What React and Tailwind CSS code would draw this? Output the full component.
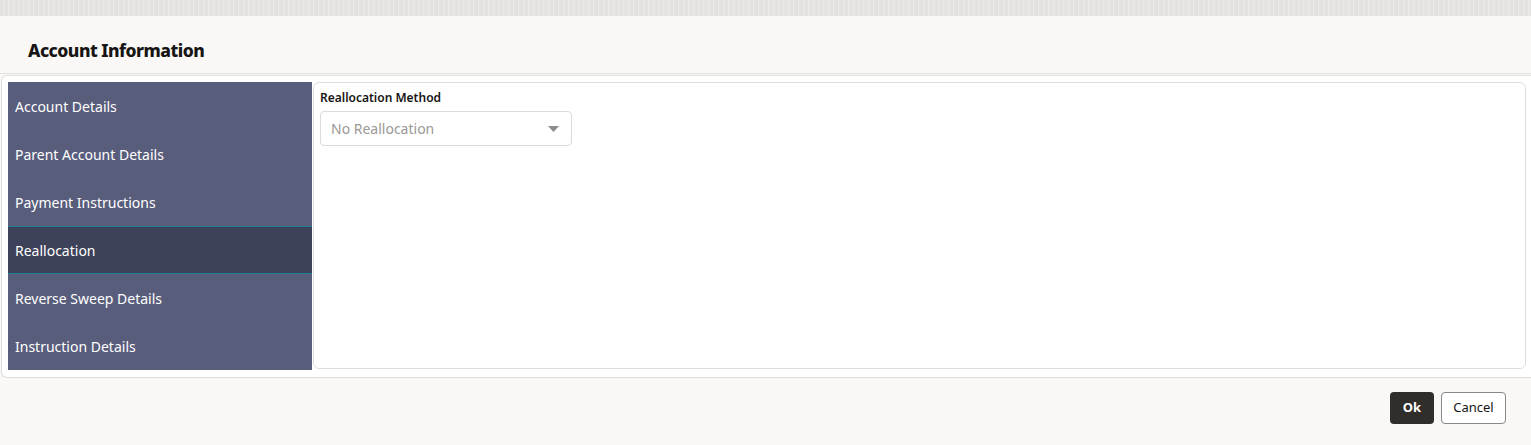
import React from "react";

const items = [
  "Account Details",
  "Parent Account Details",
  "Payment Instructions",
  "Reallocation",
  "Reverse Sweep Details",
  "Instruction Details",
];

export default function App() {
  return (
    <div className="w-[1531px] h-[445px] bg-[#f9f8f6] flex flex-col overflow-hidden" style={{ fontFamily: '"Noto Sans", "Open Sans", sans-serif' }}>
      <div className="h-[16px] bg-[#e6e4e0] bg-[repeating-linear-gradient(90deg,#dcdad6_0px,#eeece8_1px,#d8d6d2_2px,#f0eeea_3px,#e2e0dc_5px)]" />
      <div className="h-[58px] flex items-start pt-[20px] pl-[28px] border-b border-[#e4e2de]">
        <h1 className="text-[17.5px] leading-[28px] font-extrabold text-[#161513] tracking-[-0.5px]">Account Information</h1>
      </div>
      <div className="mt-px ml-px h-[303px] bg-white border border-[#e0dedb] border-r-0 rounded-l-[6px] flex pl-[6px] pt-[6px] pb-[6px] pr-[5px]">
        <div className="w-[304px] h-[288px] flex flex-col bg-[#595d7c]">
          {items.map((t, i) => (
            <div
              key={t}
              className={
                i === 3
                  ? "h-[48px] flex items-center pl-[7px] text-[14px] text-white bg-[#3d4159] border-t border-b border-[#1f7f92]"
                  : "h-[48px] flex items-center pl-[7px] text-[14px] text-white"
              }
            >
              {t}
            </div>
          ))}
        </div>
        <div className="ml-px flex-1 h-[287px] border border-[#e0dedb] rounded-[6px] pl-[6px] pt-[7px]">
          <div className="text-[12px] font-semibold text-[#161513] leading-[16px]">Reallocation Method</div>
          <div className="mt-[5px] w-[252px] h-[35px] border border-[#dcdad6] rounded-[4px] flex items-center justify-between pl-[10px] pr-[12px]">
            <span className="text-[14px] text-[#9a9896]">No Reallocation</span>
            <svg width="11" height="6" viewBox="0 0 11 6"><path d="M0 0 L11 0 L5.5 6 Z" fill="#8f8d8b" /></svg>
          </div>
        </div>
      </div>
      <div className="flex justify-end gap-[7px] pr-[25px] mt-[14px]">
        <button className="h-[32px] w-[44px] rounded-[4px] bg-[#312d2a] text-white text-[13px] font-bold">Ok</button>
        <button className="h-[32px] w-[65px] rounded-[4px] border border-[#8b8784] bg-white text-[#161513] text-[13px]">Cancel</button>
      </div>
    </div>
  );
}
